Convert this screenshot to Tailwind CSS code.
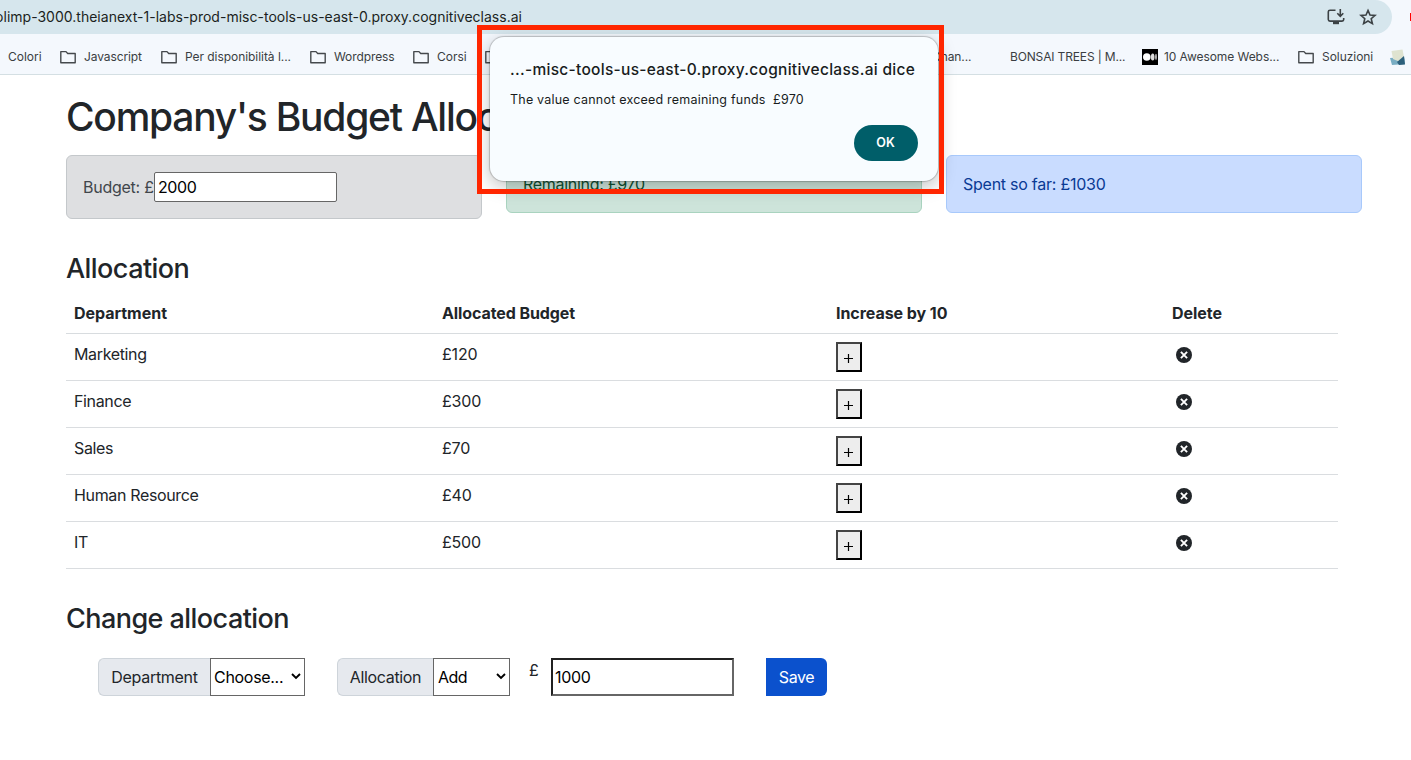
<!DOCTYPE html>
<html lang="en">
<head>
<meta charset="utf-8">
<title>Company's Budget Allocation</title>
<script src="https://cdn.jsdelivr.net/npm/@tailwindcss/browser@4"></script>
</head>
<body class="relative h-[760px] w-[1411px] overflow-hidden bg-white font-['Inter',sans-serif] text-base text-[#212529]">
<svg class="hidden">
  <symbol id="folder" viewBox="0 0 16 14"><path d="M.8 1.6H6l1.7 1.9h7.5v9.2H.8z" fill="none" stroke="#45494d" stroke-width="1.4" stroke-linejoin="round"/></symbol>
  <symbol id="delete" viewBox="0 0 16 16"><circle cx="8" cy="8" r="8" fill="#212529"/><path d="M4.9 4.9l6.2 6.2M11.1 4.9l-6.2 6.2" stroke="#fff" stroke-width="1.9"/></symbol>
  <symbol id="chevron" viewBox="0 0 10 7"><path d="M1 1l4 4 4-4" fill="none" stroke="#000" stroke-width="1.9"/></symbol>
</svg>

<header class="h-[75px] border-b border-[#d4dfe3] bg-[#f4f8fd]">
  <div class="flex h-[34px] justify-between">
    <div class="flex w-[1392px] items-center justify-between rounded-br-[17px] rounded-tr-[17px] bg-[#d6e6ed] pr-[15px]">
      <div class="flex w-[522px] justify-end overflow-hidden whitespace-nowrap pb-[2px] text-[14px] tracking-[0.01px] text-[#1b1f21]"><span>olimp-3000.theianext-1-labs-prod-misc-tools-us-east-0.proxy.cognitiveclass.ai</span></div>
      <div class="flex items-center gap-[14px]">
        <svg class="h-[18px] w-[18px]" viewBox="0 0 18 18" fill="none" stroke="#3c4245" stroke-width="1.6"><path d="M8.5 2.2H3Q1.3 2.2 1.3 3.8V11.5Q1.3 13.1 3 13.1H15Q16.7 13.1 16.7 11.5V10"/><path d="M13.3 1v7M10.3 5.3l3 3 3-3"/><path d="M6 15h6" stroke-width="2.4"/></svg>
        <svg class="h-[18px] w-[18px]" viewBox="0 0 18 18" fill="none" stroke="#3c4245" stroke-width="1.6"><path d="M9 2.4l2 4.6 5 .4-3.800 3.300 1.200 4.900L9 13l-4.400 2.600 1.200-4.900L2 7.400l5-.4z"/></svg>
      </div>
    </div>
    <div class="mt-[13px] h-2 w-[1px] bg-[#f00]"></div>
  </div>
  <div class="h-10 whitespace-nowrap text-[12px] text-[#3a3e42]">
    <div class="flex h-full items-center pt-[5px] pl-2">
      <span class="w-[52px]">Colori</span>
      <svg class="mr-2 h-[14px] w-4"><use href="#folder"/></svg><span class="w-[77px] tracking-[-0.1px]">Javascript</span>
      <svg class="mr-2 h-[14px] w-4"><use href="#folder"/></svg><span class="w-[125px] tracking-[-0.05px]">Per disponibilità l...</span>
      <svg class="mr-2 h-[14px] w-4"><use href="#folder"/></svg><span class="w-[79px] tracking-[-0.1px]">Wordpress</span>
      <svg class="mr-2 h-[14px] w-4"><use href="#folder"/></svg><span class="w-[48px]">Corsi</span>
      <svg class="h-[14px] w-4"><use href="#folder"/></svg>
      <span class="ml-[431px] w-[78px] tracking-[-0.1px]">Chan...</span>
      <span class="w-[132px] tracking-[-0.15px]">BONSAI TREES | M...</span>
      <svg class="mr-[6px] h-4 w-4" viewBox="0 0 16 16"><rect width="16" height="16" fill="#000"/><circle cx="4.800" cy="8" r="3.800" fill="#fff"/><ellipse cx="10.700" cy="8" rx="1.800" ry="3.500" fill="#ddd"/><ellipse cx="14" cy="8" rx=".8" ry="3.200" fill="#ddd"/></svg><span class="w-[134px] tracking-[-0.07px]">10 Awesome Webs...</span>
      <svg class="mr-2 h-[14px] w-4"><use href="#folder"/></svg><span class="w-[68px] tracking-[-0.05px]">Soluzioni</span>
      <svg class="h-4 w-4 shrink-0" viewBox="0 0 16 16"><path d="M0 9l14-1 1 7-13 1z" fill="#78adc3"/><path d="M1.500 2L12.500 0.500l1.500 8-5 4-6-2.500z" fill="#dfe3d0"/><path d="M7 13l7-6 1 8.500-6 .5z" fill="#2d607b"/></svg>
    </div>
  </div>
</header>

<main class="pl-[66px] pt-[17px]">
  <h1 class="h-[63px] whitespace-nowrap text-[39px] font-medium leading-[49px] tracking-[-1.25px]">Company's Budget Allocation</h1>
  <div class="flex items-start gap-6">
    <div class="flex h-16 w-[416px] items-center rounded-md border border-[#c4c8cb] bg-[#dedfe1] pl-4 text-[#41464b]">
      <span class="w-[71px] whitespace-nowrap tracking-[-0.25px]">Budget: £</span>
      <div class="flex h-[30px] w-[183px] items-center rounded-[2px] border border-[#666] bg-white pl-[3px] text-black"><span class="tracking-[-0.4px]">2000</span></div>
    </div>
    <div class="flex h-[58px] w-[416px] items-center rounded-md border border-[#a9d3bf] bg-[#cde4da] pl-4 text-[#0f5132]"><span class="tracking-[-0.3px]">Remaining: £970</span></div>
    <div class="flex h-[58px] w-[416px] items-center rounded-md border border-[#a8c9fb] bg-[#c9dcff] pl-4 text-[#0a3a94]"><span class="tracking-[-0.25px]">Spent so far: £1030</span></div>
  </div>

  <h3 class="mt-[33px] h-[41px] text-[27px] font-medium leading-[34px] tracking-[-0.55px]">Allocation</h3>
  <table class="w-[1272px] table-fixed border-collapse text-left align-top">
    <colgroup><col class="w-[368px]"><col class="w-[394px]"><col class="w-[336px]"><col class="w-[174px]"></colgroup>
    <thead><tr class="h-10 border-b border-[#d8dcdf] font-semibold"><th class="px-2"><span class="tracking-[-0.03px]">Department</span></th><th class="px-2"><span class="tracking-[-0.1px]">Allocated Budget</span></th><th class="px-2"><span class="tracking-[-0.05px]">Increase by 10</span></th><th class="px-2"><span class="tracking-[-0.05px]">Delete</span></th></tr></thead>
    <tbody id="rows"></tbody>
  </table>

  <h3 class="mt-[33px] h-14 text-[27px] font-medium leading-[34px] tracking-[-0.55px]">Change allocation</h3>
  <div class="flex h-[38px] pl-8 whitespace-nowrap">
    <div class="flex w-[112px] items-center justify-center rounded-l-md border border-r-0 border-[#ced4da] bg-[#e6e9ee]"><span class="tracking-[-0.3px]">Department</span></div>
    <div class="flex w-[95px] items-center justify-between border border-[#666] pl-[3px] pr-[3px] text-black"><span class="tracking-[-0.3px]">Choose...</span><svg class="h-[7px] w-[10px]"><use href="#chevron"/></svg></div>
    <div class="ml-8 flex w-24 items-center justify-center rounded-l-md border border-r-0 border-[#ced4da] bg-[#e6e9ee]"><span class="tracking-[-0.35px]">Allocation</span></div>
    <div class="flex w-[77px] items-center justify-between border border-[#666] pl-1 pr-[3px] text-black"><span class="tracking-[-0.5px]">Add</span><svg class="h-[7px] w-[10px]"><use href="#chevron"/></svg></div>
    <span class="ml-[19px] w-[22px]">£</span>
    <div class="flex w-[183px] items-center border-2 border-t-[#212121] border-l-[#212121] border-r-[#666] border-b-[#666] pl-[2px] text-black"><span class="tracking-[-0.3px]">1000</span></div>
    <div class="ml-8 flex w-[61px] items-center justify-center rounded-r-md bg-[#0b51cd] text-white"><span class="tracking-[-0.4px]">Save</span></div>
  </div>
</main>

<section class="absolute left-[490px] top-[37px] h-[144px] w-[448px] whitespace-nowrap rounded-[14px] bg-[#f8fcff] pl-[20px] pr-[20px] pt-[21px] shadow-[0_0_1px_1px_rgba(0,0,0,0.2),0_5px_18px_rgba(0,0,0,0.25)]">
  <h2 class="h-[33px] text-[15.5px] font-medium leading-[24px] tracking-[0.29px] text-[#191c1d]">...-misc-tools-us-east-0.proxy.cognitiveclass.ai dice</h2>
  <p class="whitespace-pre text-[12.5px] leading-[18px] tracking-[0.21px] text-[#191c1d]">The value cannot exceed remaining funds  £970</p>
  <div class="mt-4 ml-auto flex h-9 w-16 items-center justify-center rounded-full bg-[#005e69] pr-px pt-px text-[12.5px] font-semibold text-white"><span>OK</span></div>
</section>
<div class="absolute left-[477px] top-[25px] h-[169px] w-[467px] border-[5px] border-[#ff2600]"></div>

<template id="row">
  <tr class="h-[47px] border-b border-[#dadde0] align-top">
    <td class="px-2 pt-2"><span class="tracking-[-0.35px]"></span></td>
    <td class="px-2 pt-2"><span class="tracking-[-0.2px]"></span></td>
    <td class="px-2 pt-2"><div class="flex h-[30px] w-[26px] items-center border-2 border-t-[#444] border-l-[#444] border-r-black border-b-black bg-[#ededed] pl-[6px] text-black"><svg class="mt-[3px] h-[9px] w-[9px]" viewBox="0 0 9 9"><path d="M0 4.500h9M4.500 0v9" stroke="#000" stroke-width="1.200"/></svg></div></td>
    <td class="px-3 pt-[13px]"><svg class="h-4 w-4"><use href="#delete"/></svg></td>
  </tr>
</template>
<script>
[['Marketing','£120'],['Finance','£300'],['Sales','£70'],['Human Resource','£40'],['IT','£500']].forEach(function (r) {
  var n = document.getElementById('row').content.cloneNode(true), s = n.querySelectorAll('span');
  s[0].textContent = r[0]; s[1].textContent = r[1];
  document.getElementById('rows').appendChild(n);
});
</script>
</body>
</html>
